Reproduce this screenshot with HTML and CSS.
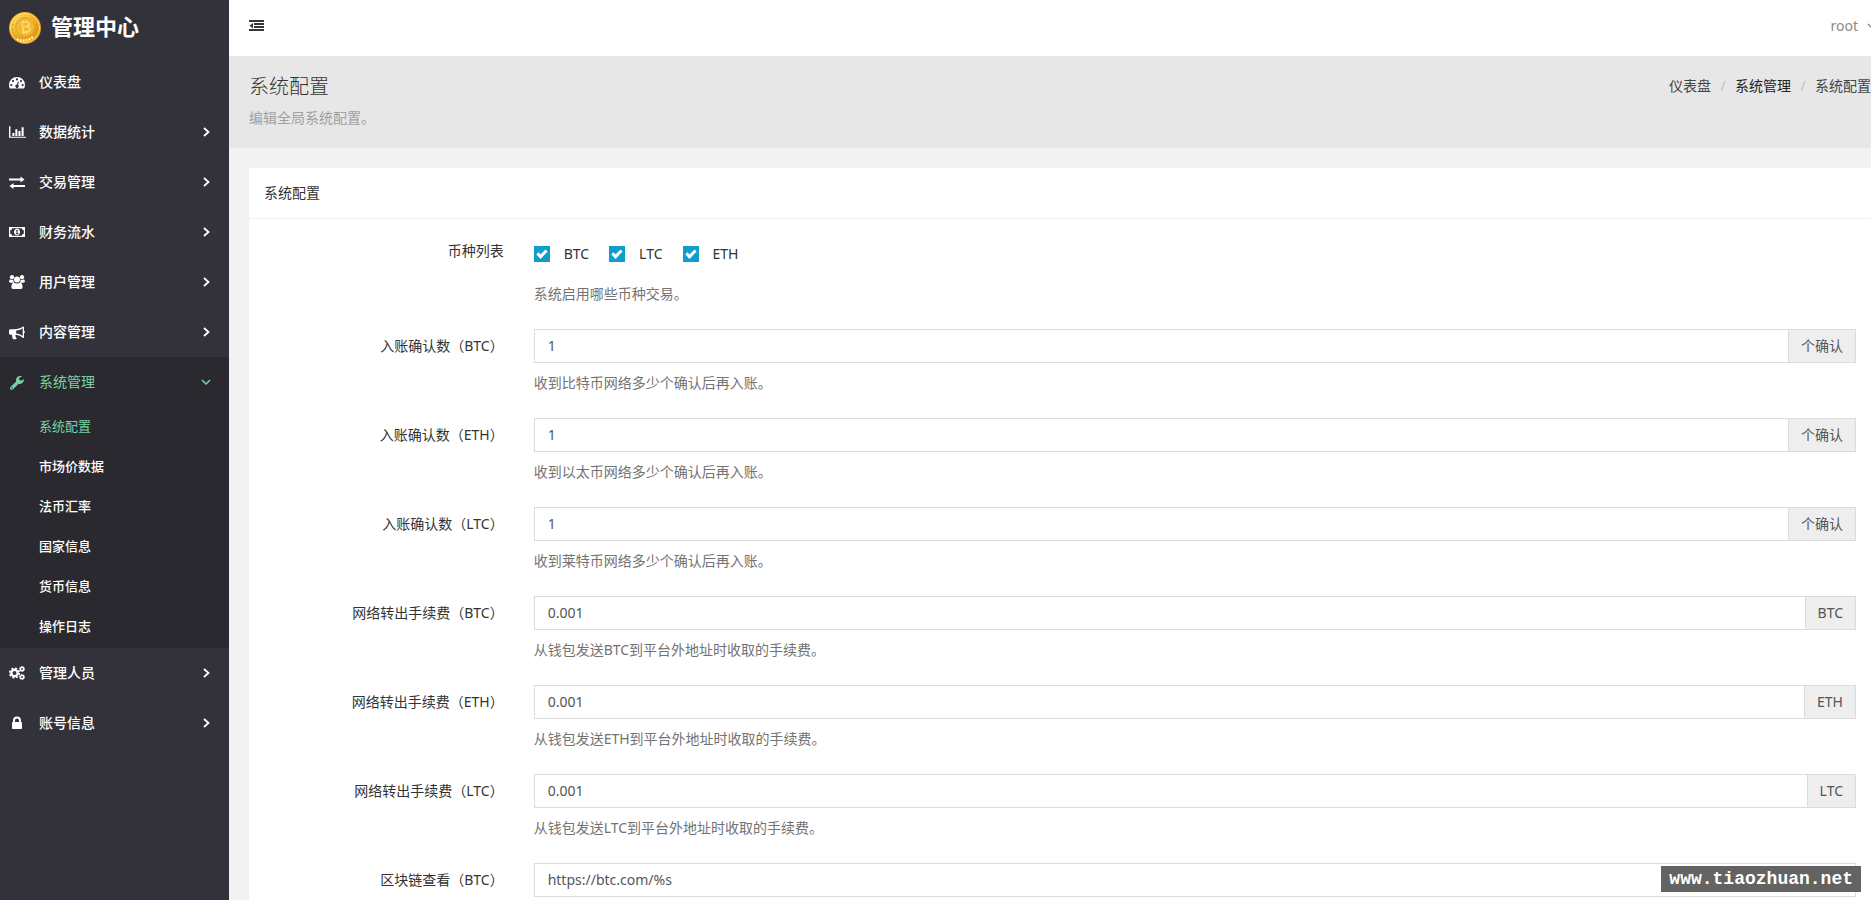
FILE: index.html
```html
<!DOCTYPE html>
<html lang="zh-CN">
<head>
<meta charset="utf-8">
<title>系统配置 - 管理中心</title>
<link rel="stylesheet" href="styles.css">
</head>
<body>
<svg class="sprite" aria-hidden="true">
  <symbol id="right" viewBox="0 0 10 10"><path d="M3 1 7.500 5 3 9" fill="none" stroke="currentColor" stroke-width="1.800"/></symbol>
  <symbol id="down" viewBox="0 0 10 10"><path d="M1 3 5 7 9 3" fill="none" stroke="currentColor" stroke-width="1.500"/></symbol>
</svg>
<div class="app">
  <aside class="sidebar">
    <a class="brand" href="#">
      <svg class="coin" viewBox="0 0 32 32" aria-hidden="true">
        <defs><radialGradient id="gold" cx=".4" cy=".35"><stop offset="0" stop-color="#fde58a"/><stop offset=".55" stop-color="#f8c93c"/><stop offset="1" stop-color="#e59a1c"/></radialGradient></defs>
        <circle cx="16" cy="16" r="16" fill="url(#gold)"/>
        <circle cx="16" cy="16" r="14.500" fill="none" stroke="#ffdf70" stroke-width="1"/>
        <circle cx="16" cy="15" r="9.500" fill="#f4b733" stroke="#e5a024" stroke-width="1"/>
        <path d="M8 27q8 4 16-2" fill="none" stroke="#fff0a8" stroke-width="2.500" stroke-dasharray="2 1"/>
        <path d="M4 12v1M3.500 17v1M28 12v1M28.500 17v1" stroke="#c47d10"/>
        <path d="M13 10.500 14.500 20M12 10.700l5-.7c4-.4 4 4 0 4.500l-3 .3 3.500-.3c4.500-.3 4.500 5 0 5.300l-4.500.5M14 8.500l.4 2M17 8.200l.3 2M15 20l.3 2M18 19.500l.3 2" fill="none" stroke="#ffe27a" stroke-width="1.200"/>
      </svg>
      <span>管理中心</span>
    </a>
    <nav>
      <ul class="menu">
        <li><a class="item" href="#"><svg class="icon" viewBox="0 0 16 16"><path fill-rule="evenodd" d="M8 3a8 8 0 0 0-8 8c0 1.300.3 2.500.9 3.500h14.200c.6-1 .9-2.200.9-3.500a8 8 0 0 0-8-8ZM2.300 10a1.100 1.100 0 1 0 0 2.200 1.100 1.100 0 0 0 0-2.200Zm1.700-4a1.100 1.100 0 1 0 0 2.200A1.100 1.100 0 0 0 4 6Zm4-1.700a1.100 1.100 0 1 0 0 2.200 1.100 1.100 0 0 0 0-2.200ZM12 6a1.100 1.100 0 1 0 0 2.200A1.100 1.100 0 0 0 12 6Zm1.700 4a1.100 1.100 0 1 0 0 2.200 1.100 1.100 0 0 0 0-2.200ZM8.800 7.600l-.9 3a1.700 1.700 0 1 0 1.200.3l.8-3Z"/></svg>仪表盘</a></li>
        <li><a class="item" href="#"><svg class="icon wide" viewBox="0 0 18 16"><path d="M0 2h1.500v11H18v1.200H0ZM3.500 9h2.200v3.200H3.500Zm3.200-4h2.200v7.200H6.700Zm3.300 2h2.200v5.200H10Zm3.300-4h2.200v9.200h-2.200Z"/></svg>数据统计<svg class="arrow"><use href="#right"/></svg></a></li>
        <li><a class="item" href="#"><svg class="icon" viewBox="0 0 16 16"><path d="M0 4.500h11.500v-2l4 3-4 3v-2H0ZM16 11H4.500V9l-4 3 4 3v-2H16Z"/></svg>交易管理<svg class="arrow"><use href="#right"/></svg></a></li>
        <li><a class="item" href="#"><svg class="icon" viewBox="0 0 16 16"><path fill-rule="evenodd" d="M0 3h16v10H0ZM3.200 4.200A2.200 2.200 0 0 1 1.200 6.200v3.600a2.200 2.200 0 0 1 2 2h9.600a2.200 2.200 0 0 1 2-2V6.200a2.200 2.200 0 0 1-2-2ZM8 4.800c4 0 4 6.400 0 6.400s-4-6.400 0-6.400Zm-1 1.600v.9h.6v2H6.800v.9h2.600v-.9h-.8V6H7.700Z"/></svg>财务流水<svg class="arrow"><use href="#right"/></svg></a></li>
        <li><a class="item" href="#"><svg class="icon" viewBox="0 0 16 16"><circle cx="3" cy="3.200" r="2.100"/><circle cx="13" cy="3.200" r="2.100"/><path d="M1 5.200c1.500 1 2.600.8 3.500.4A4 4 0 0 0 5.200 8.700H1.500C-.5 8.700 0 6 1 5.200ZM15 5.200c-1.500 1-2.600.8-3.500.4a4 4 0 0 1-.7 3.100h3.700c2 0 1.500-2.700.5-3.500Z"/><circle cx="8" cy="5.500" r="3"/><path d="M4.800 8.400c2 1.500 4.400 1.500 6.400 0 2 .4 2.600 3.600 2.300 5.100-.2 1-.9 1.500-2 1.500h-7c-1.100 0-1.800-.5-2-1.500-.3-1.500.3-4.700 2.300-5.100Z"/></svg>用户管理<svg class="arrow"><use href="#right"/></svg></a></li>
        <li><a class="item" href="#"><svg class="icon" viewBox="0 0 16 16"><path fill-rule="evenodd" d="M14 2.500c.6 0 1 .4 1 1v3.400c1.300.3 1.300 2 0 2.300v3.900c0 .6-.4 1-1 1-2-1.900-4.400-3-7-3.300-.8.400-.8 1.200-.2 1.700-.3.600.2 1.100 1 1.700-.8 1.400-2.800 1.400-3.900.7-.6-1.700-1.100-2.700-.7-4.200H1.500C.6 10.700 0 10.100 0 9.200V6.700c0-.9.6-1.500 1.500-1.500H5c3.500 0 6.500-.7 9-2.700ZM13.700 4.300C11.700 5.800 9.600 6.400 7.200 6.600v2.900c2.400.2 4.500 1 6.500 2.400Z"/></svg>内容管理<svg class="arrow"><use href="#right"/></svg></a></li>
        <li class="open">
          <a class="item" href="#"><svg class="icon" viewBox="0 0 16 16"><path fill-rule="evenodd" d="M14.700 5.200 12 6.800 10.200 5.800V4L13 2.400c-2.700-1.300-6 .5-6 3.600 0 .5.100 1 .2 1.400L1.500 13c-1.500 1.700.8 3.800 2.300 2.400l5.800-5.700c3 1.100 5.800-1.700 5.100-4.500ZM3 13.200a.7.7 0 1 1 0 1.400.7.7 0 0 1 0-1.400Z"/></svg>系统管理<svg class="arrow"><use href="#down"/></svg></a>
          <ul class="submenu">
            <li><a class="current" href="#">系统配置</a></li>
            <li><a href="#">市场价数据</a></li>
            <li><a href="#">法币汇率</a></li>
            <li><a href="#">国家信息</a></li>
            <li><a href="#">货币信息</a></li>
            <li><a href="#">操作日志</a></li>
          </ul>
        </li>
        <li><a class="item" href="#"><svg class="icon" viewBox="0 0 16 16"><g fill="none" stroke="currentColor"><circle cx="5.500" cy="8" r="3.200" stroke-width="2.400"/><circle cx="5.500" cy="8" r="4.800" stroke-width="1.600" stroke-dasharray="2 1.770"/><circle cx="13" cy="4" r="1.700" stroke-width="1.600"/><circle cx="13" cy="4" r="2.500" stroke-width="1" stroke-dasharray="1.300 1.300"/><circle cx="13" cy="12" r="1.700" stroke-width="1.600"/><circle cx="13" cy="12" r="2.500" stroke-width="1" stroke-dasharray="1.300 1.300"/></g></svg>管理人员<svg class="arrow"><use href="#right"/></svg></a></li>
        <li><a class="item" href="#"><svg class="icon" viewBox="0 0 16 16"><path fill-rule="evenodd" d="M4 7V5.500a4 4 0 0 1 8 0V7h.3c.4 0 .7.300.7.700v5.600c0 .4-.3.700-.7.700H3.700c-.4 0-.7-.3-.7-.7V7.700c0-.4.3-.7.7-.7Zm2 0h4V5.500a2 2 0 0 0-4 0Z"/></svg>账号信息<svg class="arrow"><use href="#right"/></svg></a></li>
      </ul>
    </nav>
  </aside>
  <main class="main">
    <header class="topbar">
      <button class="toggle" type="button" aria-label="收起菜单"><svg viewBox="0 0 15 12"><path d="M0 0h15v2H0ZM5 3h10v2H5Zm0 3h10v2H5ZM0 9h15v2H0ZM4 3v5.500L.5 5.700Z"/></svg></button>
      <button class="user" type="button">root<svg><use href="#down"/></svg></button>
    </header>
    <div class="pagehead">
      <div>
        <h1>系统配置</h1>
        <p>编辑全局系统配置。</p>
      </div>
      <ol class="crumbs">
        <li><a href="#">仪表盘</a></li>
        <li><a class="strong" href="#">系统管理</a></li>
        <li>系统配置</li>
      </ol>
    </div>
    <section class="card">
      <h2>系统配置</h2>
      <form class="form">
        <div class="row" role="group" aria-labelledby="coins">
          <span class="label" id="coins">币种列表</span>
          <div>
            <div class="checks">
              <label><input type="checkbox" checked>BTC</label>
              <label><input type="checkbox" checked>LTC</label>
              <label><input type="checkbox" checked>ETH</label>
            </div>
            <p class="help">系统启用哪些币种交易。</p>
          </div>
        </div>
        <div class="row">
          <label class="label" for="c1">入账确认数（BTC）</label>
          <div>
            <div class="group"><input id="c1" type="text" value="1"><span>个确认</span></div>
            <p class="help">收到比特币网络多少个确认后再入账。</p>
          </div>
        </div>
        <div class="row">
          <label class="label" for="c2">入账确认数（ETH）</label>
          <div>
            <div class="group"><input id="c2" type="text" value="1"><span>个确认</span></div>
            <p class="help">收到以太币网络多少个确认后再入账。</p>
          </div>
        </div>
        <div class="row">
          <label class="label" for="c3">入账确认数（LTC）</label>
          <div>
            <div class="group"><input id="c3" type="text" value="1"><span>个确认</span></div>
            <p class="help">收到莱特币网络多少个确认后再入账。</p>
          </div>
        </div>
        <div class="row">
          <label class="label" for="f1">网络转出手续费（BTC）</label>
          <div>
            <div class="group"><input id="f1" type="text" value="0.001"><span>BTC</span></div>
            <p class="help">从钱包发送BTC到平台外地址时收取的手续费。</p>
          </div>
        </div>
        <div class="row">
          <label class="label" for="f2">网络转出手续费（ETH）</label>
          <div>
            <div class="group"><input id="f2" type="text" value="0.001"><span>ETH</span></div>
            <p class="help">从钱包发送ETH到平台外地址时收取的手续费。</p>
          </div>
        </div>
        <div class="row">
          <label class="label" for="f3">网络转出手续费（LTC）</label>
          <div>
            <div class="group"><input id="f3" type="text" value="0.001"><span>LTC</span></div>
            <p class="help">从钱包发送LTC到平台外地址时收取的手续费。</p>
          </div>
        </div>
        <div class="row">
          <label class="label" for="u1">区块链查看（BTC）</label>
          <div>
            <div class="group"><input id="u1" type="text" value="https://btc.com/%s"></div>
          </div>
        </div>
      </form>
    </section>
  </main>
</div>
<div class="watermark">www.tiaozhuan.net</div>
</body>
</html>
```
FILE: styles.css
```css
*, *::before { box-sizing: border-box; }
body {
  margin: 0;
  height: 100vh;
  overflow: hidden;
  background: #f2f2f2;
  color: #333;
  font: 14px/20px "Noto Sans", "Noto Sans CJK SC", sans-serif;
}
ul, ol { margin: 0; padding: 0; list-style: none; }
h1, h2, p { margin: 0; font-weight: 400; }
a { color: inherit; text-decoration: none; }
button { border: 0; padding: 0; background: none; font: inherit; }
.sprite { display: none; }
.app { display: flex; height: 100vh; overflow: hidden; }

.sidebar { flex: 0 0 229px; background: #33323a; color: #fff; }
.brand {
  display: flex;
  align-items: flex-start;
  gap: 10px;
  height: 57px;
  padding: 12px 9px 0;
  font-size: 22px;
  line-height: 28px;
  font-weight: 700;
}
.coin { width: 32px; height: 32px; }
.item {
  display: flex;
  align-items: center;
  height: 50px;
  padding: 0 18px 0 9px;
  font-weight: 500;
}
.icon { width: 16px; height: 16px; margin-right: 14px; fill: currentColor; }
.wide { width: 17px; margin-right: 13px; }
.arrow { width: 10px; height: 10px; margin-left: auto; }
.open { background: #2a292f; }
.open .item { color: #79d3a4; font-weight: 400; }
.submenu { padding-bottom: 1px; }
.submenu a {
  display: block;
  padding: 9px 15px 11px 39px;
  font-size: 13px;
  font-weight: 500;
}
.submenu .current { color: #79d3a4; font-weight: 400; }

.main { flex: 1; min-width: 0; }
.topbar {
  display: flex;
  align-items: center;
  justify-content: space-between;
  height: 56px;
  padding: 0 0 4px 20px;
  background: #fff;
}
.toggle svg { display: block; width: 15px; height: 12px; fill: #32373c; }
.user { display: flex; align-items: center; gap: 9px; margin-right: -6px; color: #8a8a8a; }
.user svg { width: 10px; height: 10px; }
.pagehead {
  display: flex;
  justify-content: space-between;
  padding: 15px 0 20px 20px;
  background: #e7e7e7;
}
.pagehead h1 { font-size: 20px; line-height: 32px; font-weight: 300; }
.pagehead p { margin-top: 5px; color: #a0a0a0; }
.crumbs { display: flex; padding-top: 5px; color: #444; }
.crumbs li + li::before { content: "/"; display: inline-block; width: 24px; text-align: center; color: #c4c4c4; }
.crumbs .strong { color: #222; }

.card { margin: 20px 0 0 20px; background: #fff; }
.card h2 { padding: 15px; border-bottom: 1px solid #f0f0f0; font-size: 14px; line-height: 20px; }
.form { padding: 15px 15px 20px 16px; }
.row {
  display: grid;
  grid-template-columns: 15% 1fr;
  column-gap: 30px;
  margin-bottom: 25px;
}
.label { padding: 7px 0; text-align: right; color: #333; }
.checks { display: flex; align-items: center; gap: 20px; height: 40px; }
.checks label { display: flex; align-items: center; gap: 14px; }
.checks input {
  display: grid;
  appearance: none;
  width: 16px;
  height: 16px;
  margin: 0;
  padding: 4px 3px 0;
  background: #119dcc;
}
.checks input:checked::before {
  content: "";
  width: 10px;
  height: 6px;
  border: solid #fff;
  border-width: 0 0 3px 3px;
  transform: rotate(-45deg);
}
.help { margin-top: 10px; color: #737373; }
.group { display: flex; height: 34px; border: 1px solid #dcdcdc; }
.group input {
  flex: 1;
  min-width: 0;
  border: 0;
  padding: 0 13px;
  background: #fff;
  color: #555;
  font: inherit;
}
.group span { padding: 6px 12px; border-left: 1px solid #dcdcdc; background: #eee; color: #555; }

.watermark {
  position: fixed;
  right: 10px;
  bottom: 8px;
  padding: 0 8px;
  background: #636363;
  color: #fff;
  font: bold 18px/26px "Liberation Mono", monospace;
}
```
